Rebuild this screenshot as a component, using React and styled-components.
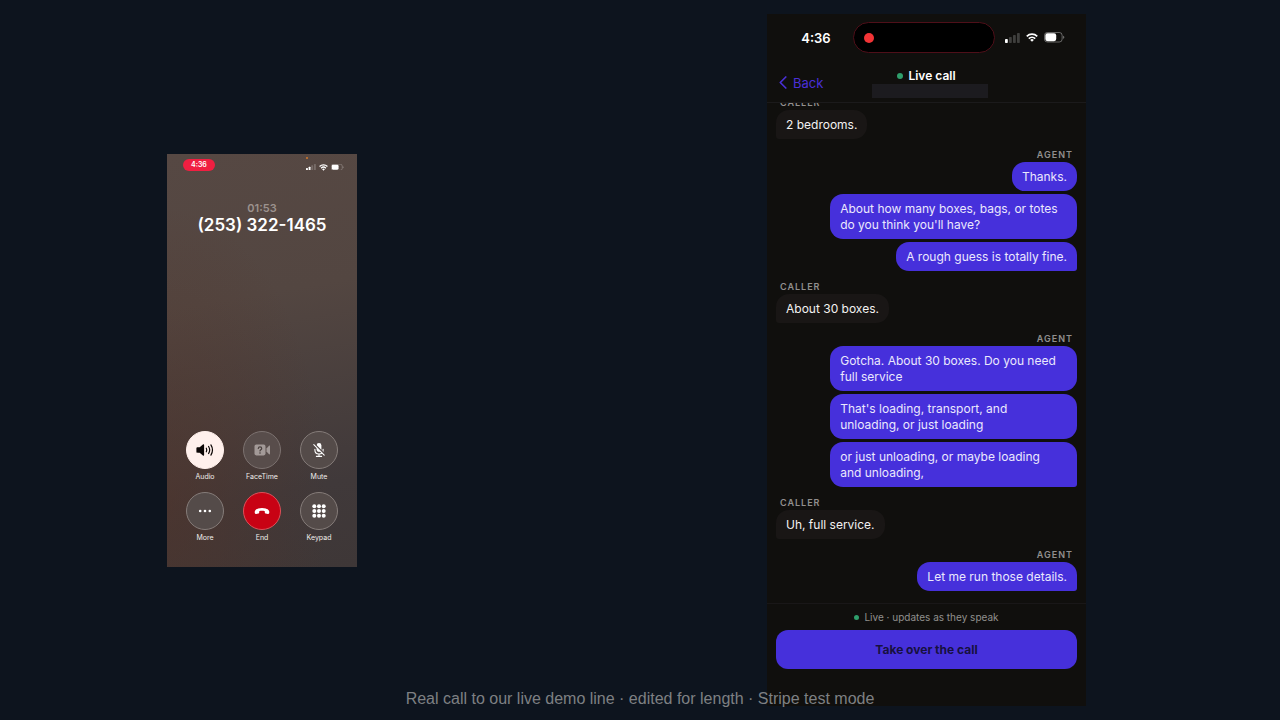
import React from 'react';
import styled, { createGlobalStyle } from 'styled-components';

const GlobalStyle = createGlobalStyle`
  * {
    box-sizing: border-box;
  }
  body {
    margin: 0;
    background: #0d141e;
    font-family: Inter, "Liberation Sans", sans-serif;
  }
  button {
    font-family: inherit;
    padding: 0;
    border: none;
    cursor: pointer;
  }
`;

const Stage = styled.main`
  position: relative;
  display: grid;
  grid-template-columns: 167fr 190fr 410fr 319fr 194fr;
  align-items: center;
  min-height: 100vh;
  overflow: hidden;
`;

const Caption = styled.p`
  position: absolute;
  left: 0;
  right: 0;
  bottom: 11px;
  margin: 0;
  text-align: center;
  font-family: "Liberation Sans", Arial, sans-serif;
  font-size: 16px;
  line-height: 20px;
  color: #7e8083;
`;

// ---- dialer phone ----

const Dialer = styled.section`
  grid-column: 2;
  display: flex;
  flex-direction: column;
  aspect-ratio: 190 / 413;
  color: #fff;
  background:
    radial-gradient(ellipse at 0% 85%, rgba(84, 50, 38, 0.5), transparent 60%),
    linear-gradient(170deg, #564843 0%, #534641 35%, #40393a 80%, #3e3737 100%);
`;

const DialerStatus = styled.div`
  display: flex;
  justify-content: space-between;
  align-items: flex-end;
  padding: 5px 13px 0 16px;
`;

const TimePill = styled.span`
  padding: 0 8px;
  border-radius: 6px;
  background: #f01f41;
  font-size: 7px;
  font-weight: 600;
  line-height: 12px;
`;

const StatusIcons = styled.div`
  position: relative;
  display: flex;
  justify-content: center;
  align-items: center;
  gap: ${(p) => p.$gap}px;
`;

const MicInUse = styled.span`
  position: absolute;
  top: -7px;
  left: 0;
  width: 2px;
  height: 2px;
  border-radius: 50%;
  background: #d5782a;
`;

const CallInfo = styled.div`
  flex: 1;
  padding-top: 30px;
  text-align: center;
`;

const Duration = styled.p`
  margin: 0;
  font-size: 11px;
  line-height: 14px;
  font-weight: 600;
  color: #9c928e;
`;

const PhoneNumber = styled.h1`
  margin: 0;
  font-size: 17px;
  line-height: 20px;
  font-weight: 600;
`;

const Keys = styled.div`
  display: grid;
  grid-template-columns: repeat(3, 38px);
  justify-content: center;
  gap: 10px 19px;
  padding-bottom: 24px;
`;

const KeyItem = styled.label`
  display: flex;
  flex-direction: column;
  align-items: center;
  gap: 3px;
  font-size: 7px;
  line-height: 10px;
  color: #f0edeb;
  white-space: nowrap;
`;

const keyColors = {
  active: ['#fff0ec', '#fff0ec', '#0c0605'],
  disabled: ['#584d4b', '#7c7270', '#a39a98'],
  danger: ['#c80214', '#dd5059', '#fff'],
  normal: ['#544b49', '#857c79', '#fff'],
};

const RoundButton = styled.button`
  display: flex;
  align-items: center;
  justify-content: center;
  width: 38px;
  height: 38px;
  border: 1px solid ${(p) => keyColors[p.$tone][1]};
  border-radius: 50%;
  background: ${(p) => keyColors[p.$tone][0]};
  color: ${(p) => keyColors[p.$tone][2]};
`;

// ---- transcript phone ----

const Monitor = styled.section`
  grid-column: 4;
  display: flex;
  flex-direction: column;
  background: #100f0d;
  color: #f3f2f1;
`;

const MonitorStatus = styled.div`
  display: grid;
  grid-template-columns: 37fr 71fr 40fr;
  align-items: center;
  padding: 8px 11px 0 12px;
`;

const Clock = styled.span`
  text-align: center;
  font-size: 13px;
  font-weight: 600;
  color: #fff;
`;

const Island = styled.div`
  display: flex;
  align-items: center;
  height: 31px;
  padding-left: 10px;
  border: 1px solid #4f0f19;
  border-radius: 16px;
  background: #000;
`;

const Dot = styled.span`
  width: ${(p) => p.$size}px;
  height: ${(p) => p.$size}px;
  border-radius: 50%;
  background: ${(p) => p.$color};
`;

const Header = styled.header`
  display: grid;
  grid-template-columns: 1fr auto 1fr;
  align-items: center;
  height: 50px;
  padding: 10px 6px 0 12px;
  border-bottom: 1px solid #1b1a1b;
`;

const BackLink = styled.a`
  display: flex;
  align-items: center;
  gap: 6px;
  font-size: 13px;
  line-height: 16px;
  color: #4a30d6;
  text-decoration: none;
`;

const TitleBlock = styled.div`
  display: flex;
  flex-direction: column;
  align-items: center;
`;

const Title = styled.h2`
  display: flex;
  align-items: center;
  gap: 5px;
  margin: 0;
  padding-right: 6px;
  font-size: 12px;
  line-height: 16px;
  font-weight: 600;
  color: #fff;
`;

const HiddenNumber = styled.div`
  width: 116px;
  height: 14px;
  background: #1c1b1f;
`;

// Keeps the newest message in view, older ones slide under the header.
const Transcript = styled.div`
  display: flex;
  flex-direction: column;
  justify-content: flex-end;
  gap: 10px;
  height: 500px;
  padding: 0 9px 12px;
  overflow: hidden;
`;

const Turn = styled.div`
  display: flex;
  flex-direction: column;
  flex-shrink: 0;
  align-items: ${(p) => (p.$agent ? 'flex-end' : 'flex-start')};
  gap: 3px;
`;

const Speaker = styled.span`
  margin-bottom: -2px;
  padding: 0 4px;
  font-size: 9px;
  line-height: 12px;
  font-weight: 600;
  letter-spacing: 1px;
  text-transform: uppercase;
  color: #918f8e;
`;

const Bubble = styled.p`
  max-width: 82%;
  margin: 0;
  padding: 7px 10px 6px;
  border-radius: 13px;
  font-size: 12px;
  line-height: 16px;
  white-space: pre-line;
  background: ${(p) => (p.$agent ? '#4630db' : '#191615')};
  color: ${(p) => (p.$agent ? '#ebe8fd' : '#f3f2f1')};
  &:last-child {
    ${(p) => (p.$agent ? 'border-bottom-right-radius: 3px;' : 'border-bottom-left-radius: 3px;')}
  }
  ${(p) => p.$full && 'width: 82%;'}
`;

const Footer = styled.footer`
  display: flex;
  flex-direction: column;
  gap: 6px;
  padding: 6px 9px 37px;
  border-top: 1px solid #191718;
`;

const LiveNote = styled.p`
  display: flex;
  align-items: center;
  justify-content: center;
  gap: 5px;
  margin: 0;
  font-size: 10px;
  line-height: 14px;
  color: #918f8e;
`;

const TakeOver = styled.button`
  height: 39px;
  border-radius: 12px;
  background: #4630db;
  color: #17113f;
  font-size: 12px;
  font-weight: 700;
`;

// ---- icons ----

const Signal = ({ width, bars = 1 }) => (
  <svg width={width} viewBox="0 0 15 10" fill="#fff">
    {[0, 1, 2, 3].map((i) => (
      <rect key={i} x={i * 4} y={6 - i * 2} width="2.8" height={4 + i * 2} rx="0.8" opacity={i < bars ? 1 : 0.2} />
    ))}
  </svg>
);

const Wifi = ({ width }) => (
  <svg width={width} viewBox="0 0 16 12" fill="none" stroke="#fff" strokeWidth="2.3">
    <path d="M1 4.4a10.2 10.2 0 0 1 14 0" />
    <path d="M3.7 7.4a6.3 6.3 0 0 1 8.6 0" />
    <path d="M5.6 9.3a3.4 3.4 0 0 1 4.8 0L8 11.8z" fill="#fff" stroke="none" />
  </svg>
);

const Battery = ({ width }) => (
  <svg width={width} viewBox="0 0 22 11">
    <rect x="0.5" y="0.5" width="18.5" height="10" rx="3" fill="none" stroke="#fff" strokeOpacity="0.38" />
    <rect x="1.4" y="1.4" width="11.4" height="8.2" rx="2.2" fill="#fff" />
    <path d="M20 3.8v3.4c.8-.3 1.3-.9 1.3-1.7s-.5-1.4-1.3-1.7z" fill="#fff" opacity="0.4" />
  </svg>
);

const AudioIcon = () => (
  <svg width="18" height="14" viewBox="0 0 18 14" fill="none" stroke="currentColor" strokeWidth="1.2" strokeLinecap="round">
    <path d="M0.4 5.4c0-.8.4-1.2 1.2-1.2h2.1l3.2-2.7c.6-.5 1.2-.2 1.2.5v10c0 .7-.6 1-1.2.5L3.7 9.8H1.6c-.8 0-1.2-.4-1.2-1.2z" fill="currentColor" stroke="none" />
    <path d="M10.3 5.2a3.6 3.6 0 0 1 0 3.6" />
    <path d="M12.6 3.5a6.6 6.6 0 0 1 0 7" />
    <path d="M14.9 1.9a9.6 9.6 0 0 1 0 10.2" />
  </svg>
);

const FaceTimeIcon = () => (
  <svg width="17" height="12" viewBox="0 0 17 12" fill="currentColor">
    <rect x="0.5" y="0.6" width="11" height="10.8" rx="1.8" />
    <path d="M12.5 4.4l2.3-2.5c.6-.6 1.2-.4 1.2.4v7.4c0 .8-.6 1-1.2.4l-2.3-2.5z" />
    <path d="M4.3 4.5c.1-1.1.8-1.7 1.7-1.7s1.7.6 1.7 1.6c0 1.3-1.7 1.3-1.7 2.5" fill="none" stroke="#4a403e" strokeWidth="1.2" strokeLinecap="round" />
    <circle cx="6" cy="9" r="0.8" fill="#4a403e" />
  </svg>
);

const MuteIcon = () => (
  <svg width="14" height="16" viewBox="0 0 14 16" fill="none" stroke="currentColor" strokeWidth="1.1" strokeLinecap="round">
    <rect x="4.6" y="1" width="4.8" height="9" rx="2.4" fill="currentColor" stroke="none" />
    <path d="M2.9 7.2v.8c0 2.4 1.7 4 4.1 4s4.1-1.6 4.1-4v-.8M7 12v2.2M4.4 14.4h5.2" />
    <path d="M2.4 2.2l10.2 10.2" stroke="#544b49" strokeWidth="2" />
    <path d="M1.8 2.7l10.4 10.4" />
  </svg>
);

const MoreIcon = () => (
  <svg width="14" height="4" viewBox="0 0 14 4" fill="currentColor">
    {[2.2, 7, 11.8].map((x) => (
      <circle key={x} cx={x} cy="2" r="1.3" />
    ))}
  </svg>
);

const EndIcon = () => (
  <svg width="16" height="8" viewBox="0 0 16 8" fill="currentColor">
    <path d="M8 .9c3.2 0 5.7 1 6.8 2.6.6.9.6 1.9.3 2.8-.2.5-.6.7-1.2.6l-2.3-.4c-.6-.1-.8-.4-.8-1V4.2C10 3.9 9 3.8 8 3.8s-2 .1-2.800.4v1.3c0 .6-.2.9-.8 1l-2.3.4c-.6.100-1-.1-1.2-.6-.3-.9-.3-1.9.3-2.8C2.3 1.9 4.8.9 8 .9z" />
  </svg>
);

const KeypadIcon = () => (
  <svg width="14" height="14" viewBox="0 0 14 14" fill="currentColor">
    {[2.3, 7, 11.7].map((y) => [2.3, 7, 11.7].map((x) => <circle key={`${x}-${y}`} cx={x} cy={y} r="2" />))}
  </svg>
);

const ChevronLeft = () => (
  <svg width="8" height="13" viewBox="0 0 8 13" fill="none" stroke="currentColor" strokeWidth="1.7" strokeLinecap="round" strokeLinejoin="round">
    <path d="M6.8 1L1.3 6.5l5.5 5.5" />
  </svg>
);

const keys = [
  { id: 'audio', label: 'Audio', tone: 'active', Icon: AudioIcon },
  { id: 'facetime', label: 'FaceTime', tone: 'disabled', Icon: FaceTimeIcon },
  { id: 'mute', label: 'Mute', tone: 'normal', Icon: MuteIcon },
  { id: 'more', label: 'More', tone: 'normal', Icon: MoreIcon },
  { id: 'end', label: 'End', tone: 'danger', Icon: EndIcon },
  { id: 'keypad', label: 'Keypad', tone: 'normal', Icon: KeypadIcon },
];

const turns = [
  { who: 'Caller', lines: ['2 bedrooms.'] },
  {
    who: 'Agent',
    lines: ['Thanks.', "About how many boxes, bags, or totes\ndo you think you'll have?", 'A rough guess is totally fine.'],
  },
  { who: 'Caller', lines: ['About 30 boxes.'] },
  {
    who: 'Agent',
    lines: [
      'Gotcha. About 30 boxes. Do you need\nfull service',
      "That's loading, transport, and\nunloading, or just loading",
      'or just unloading, or maybe loading\nand unloading,',
    ],
  },
  { who: 'Caller', lines: ['Uh, full service.'] },
  { who: 'Agent', lines: ['Let me run those details.'] },
];

const App = () => {
  return (
    <>
      <GlobalStyle />
      <Stage>
        <Dialer>
          <DialerStatus>
            <TimePill>4:36</TimePill>
            <StatusIcons $gap={3}>
              <MicInUse />
              <Signal width={10} bars={2} />
              <Wifi width={9} />
              <Battery width={13} />
            </StatusIcons>
          </DialerStatus>
          <CallInfo>
            <Duration>01:53</Duration>
            <PhoneNumber>(253) 322-1465</PhoneNumber>
          </CallInfo>
          <Keys>
            {keys.map(({ id, label, tone, Icon }) => (
              <KeyItem key={id} htmlFor={id}>
                <RoundButton id={id} type="button" $tone={tone}>
                  <Icon />
                </RoundButton>
                {label}
              </KeyItem>
            ))}
          </Keys>
        </Dialer>

        <Monitor>
          <MonitorStatus>
            <Clock>4:36</Clock>
            <Island>
              <Dot $size={10} $color="#f23436" />
            </Island>
            <StatusIcons $gap={6}>
              <Signal width={15} />
              <Wifi width={12} />
              <Battery width={21} />
            </StatusIcons>
          </MonitorStatus>
          <Header>
            <BackLink href="#back">
              <ChevronLeft />
              Back
            </BackLink>
            <TitleBlock>
              <Title>
                <Dot $size={6} $color="#2f9e6b" />
                Live call
              </Title>
              <HiddenNumber />
            </TitleBlock>
          </Header>
          <Transcript>
            {turns.map((turn, i) => (
              <Turn key={i} $agent={turn.who === 'Agent'}>
                <Speaker>{turn.who}</Speaker>
                {turn.lines.map((line) => (
                  <Bubble key={line} $agent={turn.who === 'Agent'} $full={line.includes('\n')}>
                    {line}
                  </Bubble>
                ))}
              </Turn>
            ))}
          </Transcript>
          <Footer>
            <LiveNote>
              <Dot $size={5} $color="#2f9e6b" />
              Live · updates as they speak
            </LiveNote>
            <TakeOver type="button">Take over the call</TakeOver>
          </Footer>
        </Monitor>
        <Caption>Real call to our live demo line · edited for length · Stripe test mode</Caption>
      </Stage>
    </>
  );
};

export default App;
